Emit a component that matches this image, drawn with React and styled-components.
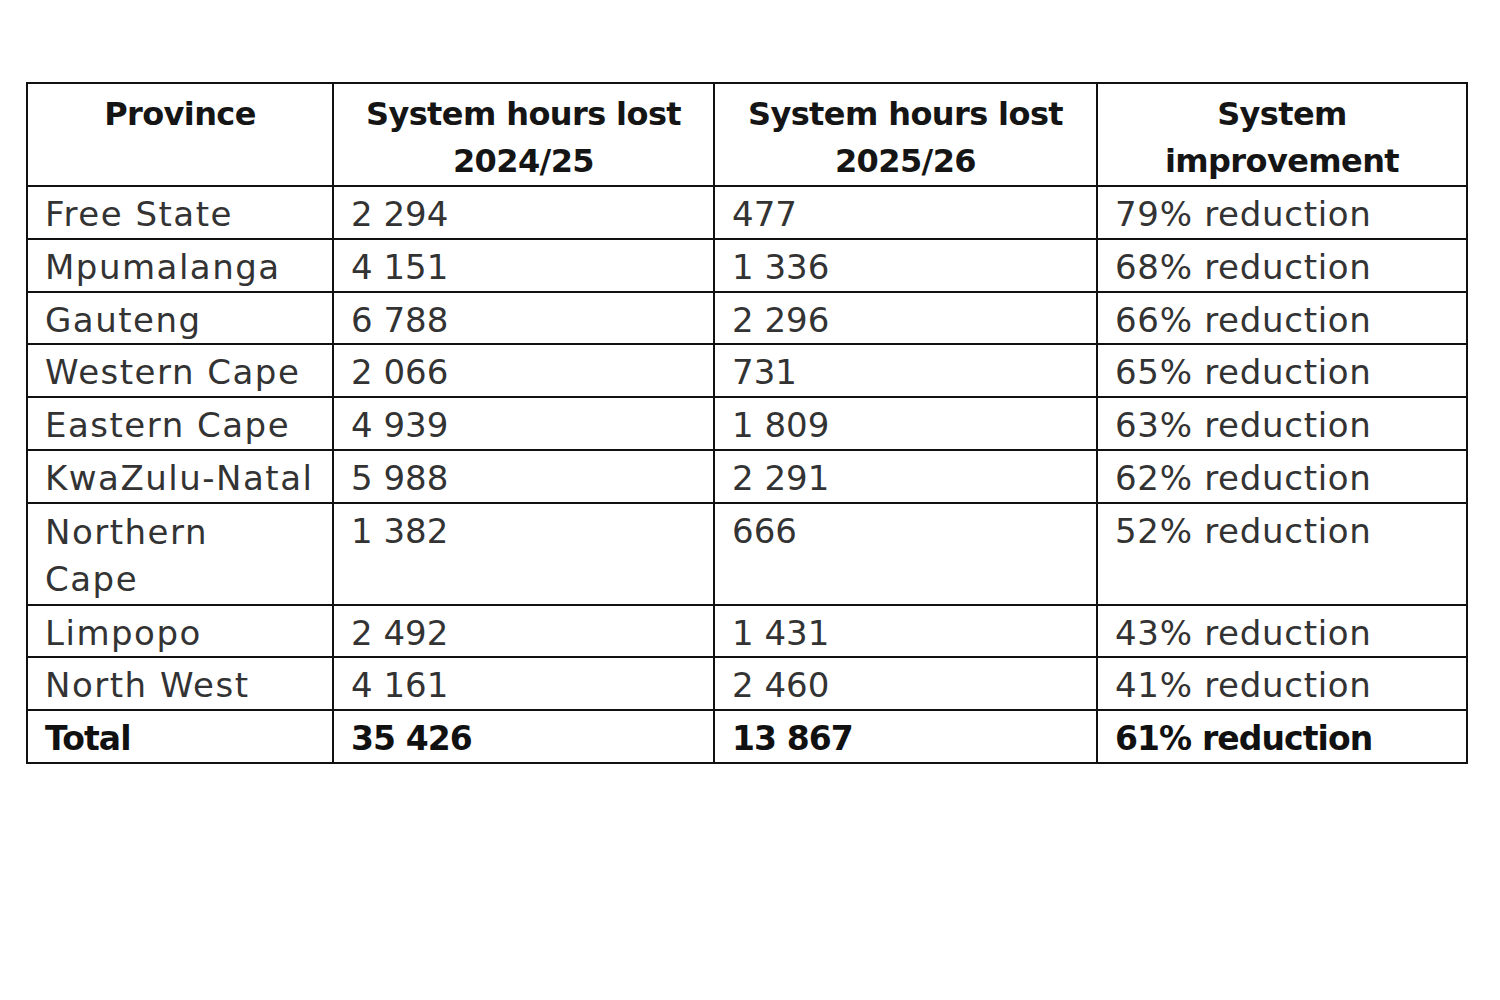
import React from "react";
import styled, { createGlobalStyle } from "styled-components";

const GlobalStyle = createGlobalStyle`
  html, body {
    margin: 0;
    padding: 0;
    background: #ffffff;
  }
  body {
    font-family: "DejaVu Sans", "Liberation Sans", sans-serif;
  }
`;

const rows = [
  { province: "Free State", lost2425: "2 294", lost2526: "477", change: "79% reduction" },
  { province: "Mpumalanga", lost2425: "4 151", lost2526: "1 336", change: "68% reduction" },
  { province: "Gauteng", lost2425: "6 788", lost2526: "2 296", change: "66% reduction" },
  { province: "Western Cape", lost2425: "2 066", lost2526: "731", change: "65% reduction" },
  { province: "Eastern Cape", lost2425: "4 939", lost2526: "1 809", change: "63% reduction" },
  { province: "KwaZulu-Natal", lost2425: "5 988", lost2526: "2 291", change: "62% reduction" },
  { province: "Northern Cape", lost2425: "1 382", lost2526: "666", change: "52% reduction", wrap: true },
  { province: "Limpopo", lost2425: "2 492", lost2526: "1 431", change: "43% reduction" },
  { province: "North West", lost2425: "4 161", lost2526: "2 460", change: "41% reduction" },
];

const total = { province: "Total", lost2425: "35 426", lost2526: "13 867", change: "61% reduction" };

const Page = styled.div`
  width: 1500px;
  height: 1000px;
  padding: 82px 0 0 26px;
  box-sizing: border-box;
`;

const Table = styled.table`
  border-collapse: collapse;
  table-layout: fixed;
  width: 1442px;
  border: 2px solid #111;
`;

const HeadCell = styled.th`
  border: 2px solid #111;
  padding: 7px 10px 0;
  font-size: 32px;
  font-weight: 700;
  line-height: 47px;
  color: #151515;
  text-align: center;
  vertical-align: top;
  letter-spacing: -0.6px;
`;

const Cell = styled.td`
  border: 2px solid #111;
  padding: 5px 8px 0 17px;
  font-size: ${(p) => (p.$bold ? "33px" : "34px")};
  font-weight: ${(p) => (p.$bold ? 700 : 400)};
  line-height: ${(p) => (p.$wrap ? "47.4px" : "45.8px")};
  color: ${(p) => (p.$bold ? "#111" : "#333")};
  text-align: left;
  vertical-align: top;
  white-space: ${(p) => (p.$wrap ? "normal" : "nowrap")};
  letter-spacing: ${(p) => (p.$bold ? "-0.9px" : `${p.$spacing || 0}px`)};
`;

const ProvinceText = styled.span`
  display: block;
  width: ${(p) => (p.$wrap ? "200px" : "auto")};
`;

const Row = ({ r, bold }) => (
  <tr>
    <Cell $bold={bold} $wrap={r.wrap} $spacing={1.5}>
      <ProvinceText $wrap={r.wrap}>{r.province}</ProvinceText>
    </Cell>
    <Cell $bold={bold}>{r.lost2425}</Cell>
    <Cell $bold={bold}>{r.lost2526}</Cell>
    <Cell $bold={bold} $spacing={0.7}>{r.change}</Cell>
  </tr>
);

export default function App() {
  return (
    <Page>
      <GlobalStyle />
      <Table>
        <colgroup>
          <col style={{ width: 306 }} />
          <col style={{ width: 381 }} />
          <col style={{ width: 383 }} />
          <col style={{ width: 370 }} />
        </colgroup>
        <thead>
          <tr>
            <HeadCell>Province</HeadCell>
            <HeadCell>
              System hours lost
              <br />
              2024/25
            </HeadCell>
            <HeadCell>
              System hours lost
              <br />
              2025/26
            </HeadCell>
            <HeadCell>
              System
              <br />
              improvement
            </HeadCell>
          </tr>
        </thead>
        <tbody>
          {rows.map((r) => (
            <Row key={r.province} r={r} />
          ))}
          <Row r={total} bold />
        </tbody>
      </Table>
    </Page>
  );
}
